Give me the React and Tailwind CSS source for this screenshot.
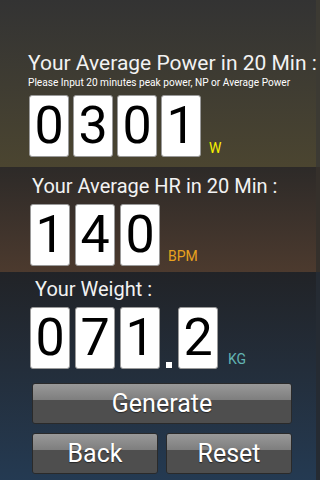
const font = { fontFamily: "Roboto, 'Liberation Sans', sans-serif" };

function Digit({ d }) {
  return (
    <div className="w-[40px] h-[62px] bg-white rounded-[3px] border border-[#9a9a9a] flex items-center justify-center text-[52px] leading-none text-black">
      {d}
    </div>
  );
}

function Btn({ label, className }) {
  return (
    <button
      className={`relative h-[41px] rounded-[3px] border border-[#2a2a2a] overflow-hidden flex flex-col ${className}`}
    >
      <div className="h-[42%] w-full bg-gradient-to-b from-[#999999] to-[#7e7e7e]" />
      <div className="flex-1 w-full bg-[#4e4e4e]" />
      <span className="absolute inset-0 flex items-center justify-center text-[25px] text-white [text-shadow:0_1px_1px_rgba(0,0,0,0.5)]">
        {label}
      </span>
    </button>
  );
}

export default function App() {
  return (
    <div className="w-[320px] h-[480px] overflow-hidden flex flex-col" style={font}>
      {/* Power */}
      <div className="h-[167px] bg-gradient-to-b from-[#333333] to-[#4b4530] px-[28px] pt-[50px] border-r-4 border-[#3c3a33]">
        <div className="text-[21px] leading-[26px] text-[#f2f2f2] whitespace-nowrap">Your Average Power in 20 Min :</div>
        <div className="text-[11px] leading-[14px] text-white whitespace-nowrap origin-left scale-x-[0.92]">
          Please Input 20 minutes peak power, NP or Average Power
        </div>
        <div className="flex items-end gap-[4px] mt-[5px] ml-[1px]">
          <Digit d="0" />
          <Digit d="3" />
          <Digit d="0" />
          <Digit d="1" />
          <span className="ml-[4px] mb-[2px] text-[14px] leading-none text-[#f5f000]">W</span>
        </div>
      </div>

      {/* HR */}
      <div className="h-[105px] bg-gradient-to-b from-[#2d2a28] to-[#4c3a2e] px-[30px] pt-[6px] border-r-4 border-[#35302b]">
        <div className="text-[20px] leading-[26px] text-[#f2f2f2] whitespace-nowrap pl-[2px]">Your Average HR in 20 Min :</div>
        <div className="flex items-end gap-[5px] mt-[5px]">
          <Digit d="1" />
          <Digit d="4" />
          <Digit d="0" />
          <span className="ml-[3px] mb-[3px] text-[14px] leading-none text-[#e8a21e]">BPM</span>
        </div>
      </div>

      {/* Weight */}
      <div className="flex-1 bg-gradient-to-b from-[#212327] to-[#243a52] px-[30px] pt-[4px] border-r-4 border-[#252b33]">
        <div className="text-[20px] leading-[26px] text-[#f2f2f2] whitespace-nowrap pl-[5px]">Your Weight :</div>
        <div className="flex items-end gap-[5px] mt-[5px]">
          <Digit d="0" />
          <Digit d="7" />
          <Digit d="1" />
          <div className="w-[6px] h-[6px] bg-white mb-[1px] mx-[1px]" />
          <Digit d="2" />
          <span className="ml-[5px] mb-[3px] text-[14px] leading-none text-[#62b3b3]">KG</span>
        </div>
        <div className="mt-[14px] ml-[2px] w-[260px] flex flex-col gap-[9px]">
          <Btn label="Generate" className="w-[260px]" />
          <div className="flex gap-[8px]">
            <Btn label="Back" className="w-[126px]" />
            <Btn label="Reset" className="w-[126px]" />
          </div>
        </div>
      </div>
    </div>
  );
}
